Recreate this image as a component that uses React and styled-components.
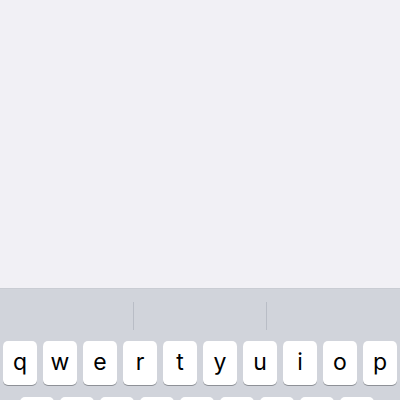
import React from 'react'
import styled, { createGlobalStyle } from 'styled-components';

const GlobalStyle = createGlobalStyle`
  body {
    margin: 0;
    background: #f1f0f5;
    font-family: Inter, "Liberation Sans", sans-serif;
  }
`;

const topRow = ['q', 'w', 'e', 'r', 't', 'y', 'u', 'i', 'o', 'p'];
const middleRow = ['a', 's', 'd', 'f', 'g', 'h', 'j', 'k', 'l'];

const App = () => {
  return (
    <Screen>
      <GlobalStyle />
      <Content />
      <Keyboard>
        <Suggestions>
          <Suggestion />
          <Divider />
          <Suggestion />
          <Divider />
          <Suggestion />
        </Suggestions>
        <Row>
          {topRow.map((letter) => (
            <Key key={letter}>{letter}</Key>
          ))}
        </Row>
        <Row $offset={20}>
          {middleRow.map((letter) => (
            <Key key={letter}>{letter}</Key>
          ))}
        </Row>
      </Keyboard>
    </Screen>
  )
}

export default App

const Screen = styled.div`
  width: 400px;
  height: 400px;
  display: flex;
  flex-direction: column;
  overflow: hidden;
`;
const Content = styled.div`
  height: 288px;
  flex-shrink: 0;
  background: #f1f0f5;
`;
const Keyboard = styled.div`
  flex: 1;
  background: #d1d4db;
  border-top: 1px solid #c9ccd3;
`;
const Suggestions = styled.div`
  height: 52px;
  display: flex;
  align-items: flex-start;
  padding-top: 13px;
  box-sizing: border-box;
`;
const Suggestion = styled.div`
  width: 133px;
  &:nth-child(3) {
    width: 132px;
  }
`;
const Divider = styled.div`
  width: 1px;
  height: 28px;
  background: #b9bdc6;
`;
const Row = styled.div`
  display: flex;
  gap: 6px;
  padding-left: ${(p) => p.$offset || 3}px;
  margin-bottom: 12px;
`;
const Key = styled.div`
  width: 34px;
  height: 44px;
  flex-shrink: 0;
  background: #ffffff;
  border-radius: 5px;
  box-shadow: 0 1px 0 #8e9197;
  display: flex;
  align-items: center;
  justify-content: center;
  font-size: 23px;
  color: #000000;
  padding-bottom: 3px;
  box-sizing: border-box;
`;
